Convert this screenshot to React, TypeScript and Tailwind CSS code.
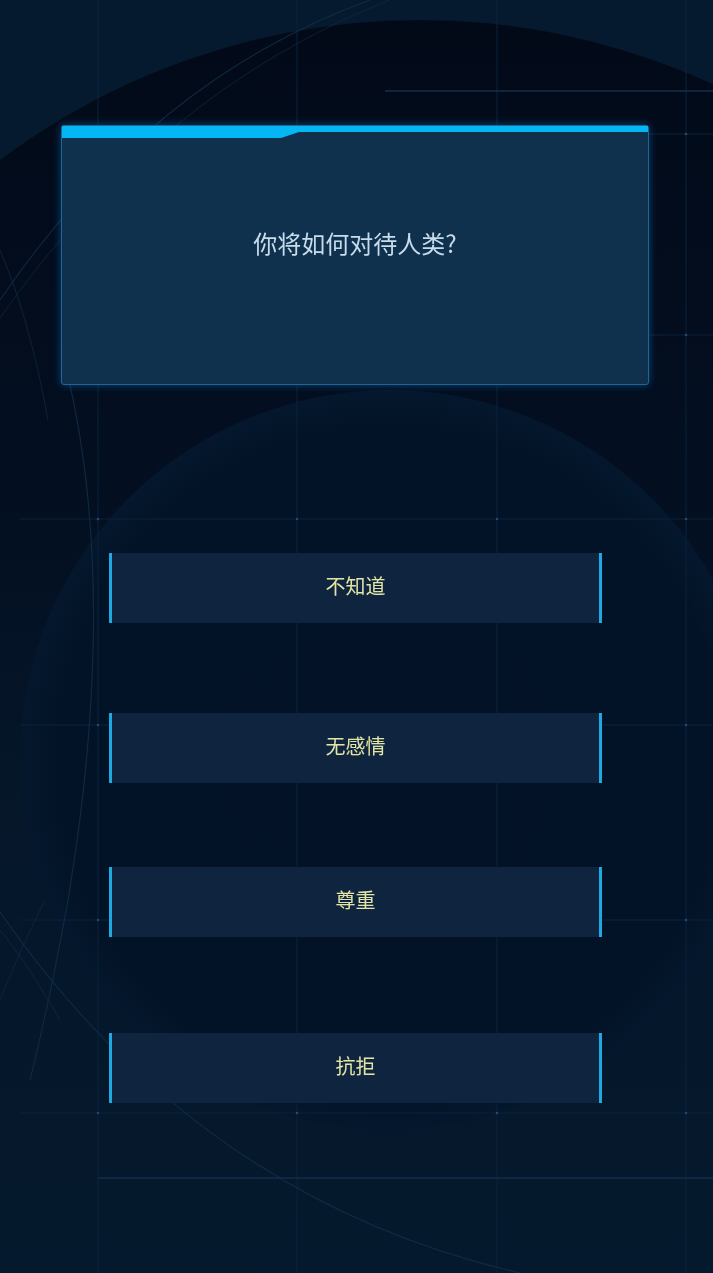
import React from "react";

const options = [
  { label: "不知道", mt: "mt-[168px]" },
  { label: "无感情", mt: "mt-[90px]" },
  { label: "尊重", mt: "mt-[84px]" },
  { label: "抗拒", mt: "mt-[96px]" },
];

const Backdrop = () => (
  <svg
    className="absolute inset-0"
    width="713"
    height="1273"
    viewBox="0 0 713 1273"
    aria-hidden="true"
  >
    <defs>
      <linearGradient id="disc" x1="0" y1="0" x2="0" y2="1">
        <stop offset="0" stopColor="#020a18" />
        <stop offset="0.3" stopColor="#030e20" />
        <stop offset="0.55" stopColor="#051629" />
        <stop offset="1" stopColor="#051a2f" />
      </linearGradient>
      <radialGradient id="inner" cx="0.5" cy="0.5" r="0.5">
        <stop offset="0" stopColor="#031226" />
        <stop offset="0.9" stopColor="#031327" />
        <stop offset="1" stopColor="#04172c" />
      </radialGradient>
    </defs>
    <rect width="713" height="1273" fill="#061a2f" />
    {/* big dark disc at the top */}
    <circle cx="420" cy="720" r="700" fill="url(#disc)" />
    {/* lower ring */}
    <circle cx="390" cy="760" r="370" fill="url(#inner)" />
    {/* grid */}
    <g stroke="#0b223c" strokeWidth="1">
      <line x1="98" y1="0" x2="98" y2="1273" />
      <line x1="297" y1="0" x2="297" y2="1273" />
      <line x1="497" y1="0" x2="497" y2="1273" />
      <line x1="686" y1="0" x2="686" y2="1273" />
      <line x1="20" y1="519" x2="713" y2="519" />
      <line x1="20" y1="725" x2="713" y2="725" />
      <line x1="20" y1="920" x2="713" y2="920" />
      <line x1="20" y1="1113" x2="713" y2="1113" />
      <line x1="98" y1="1178" x2="713" y2="1178" stroke="#0d2744" strokeWidth="2" />
      <line x1="649" y1="134" x2="713" y2="134" />
      <line x1="649" y1="335" x2="713" y2="335" />
    </g>
    <line x1="385" y1="91" x2="713" y2="91" stroke="#172e48" strokeWidth="1.5" />
    <g fill="#24486e">
      {[98, 297, 497, 686].map((x) =>
        [519, 725, 920, 1113].map((y) => (
          <circle key={`${x}-${y}`} cx={x} cy={y} r="1.3" />
        ))
      )}
      <circle cx="686" cy="134" r="1.3" />
      <circle cx="686" cy="335" r="1.3" />
    </g>
    {/* faint arcs */}
    <g fill="none" stroke="#15304c" strokeWidth="1.2" opacity="0.75">
      <path d="M0 300 Q 150 80 370 0" />
      <path d="M0 318 Q 160 90 390 0" opacity="0.6" />
      <path d="M0 250 Q 30 320 48 420" opacity="0.7" />
      <path d="M70 385 Q 118 600 68 900 Q 50 1000 30 1080" />
      <path d="M0 912 Q 200 1200 520 1273" />
      <path d="M0 1000 Q 20 950 45 900" opacity="0.6" />
      <path d="M0 930 Q 25 960 60 1020" opacity="0.6" />
    </g>
  </svg>
);

export default function App() {
  return (
    <div
      className="relative w-[713px] h-[1273px] overflow-hidden bg-[#061a2f]"
      style={{ fontFamily: '"Noto Sans CJK SC", "Noto Sans", sans-serif' }}
    >
      <Backdrop />
      <div className="relative flex flex-col pt-[125px]">
        {/* question card */}
        <div className="ml-[61px] w-[588px] h-[260px] flex flex-col bg-[#10314e] border border-[#1f6598] rounded-[3px] shadow-[0_0_8px_rgba(20,140,230,0.45)]">
          <svg width="586" height="13" viewBox="0 0 586 13" className="block">
            <polygon
              points="0,0 586,0 586,6 237,6 219,12 0,12"
              fill="#05b6f4"
            />
          </svg>
          <div className="flex justify-center pt-[89px] text-[24px] leading-[30px] text-[#c7dbeb]">
            你将如何对待人类?
          </div>
        </div>

        {/* answers */}
        <div className="ml-[109px] w-[493px] flex flex-col">
          {options.map((o) => (
            <div
              key={o.label}
              className={`${o.mt} h-[70px] flex items-center justify-center pb-[5px] bg-[#0f243f] border-x-[3px] border-[#1ea9e0] text-[20px] text-[#e2e5a4]`}
            >
              {o.label}
            </div>
          ))}
        </div>
      </div>
    </div>
  );
}
